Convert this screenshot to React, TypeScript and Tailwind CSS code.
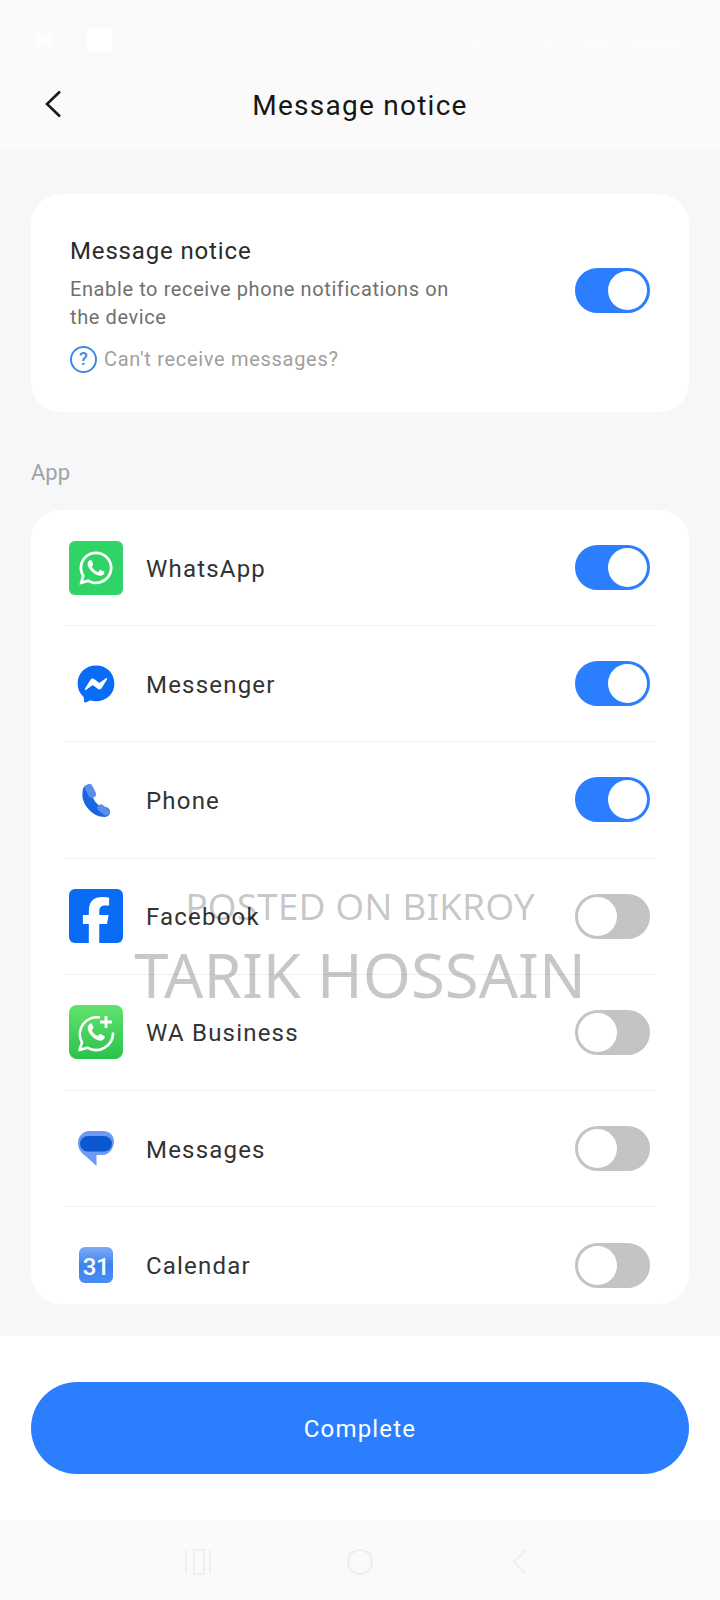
import { ReactNode } from 'react';
import { FaFacebookMessenger, FaWhatsapp } from 'react-icons/fa';
import { FaFacebookF } from 'react-icons/fa6';

function Toggle({ on, className = '' }: { on: boolean; className?: string }) {
  return (
    <div
      className={`flex h-[45px] w-[75px] shrink-0 rounded-full border-[3px] ${className} ${
        on ? 'justify-end border-[#2b7fff] bg-[#2b7fff]' : 'justify-start border-[#c4c4c4] bg-[#c4c4c4]'
      }`}
    >
      <div className="h-[39px] w-[39px] rounded-full bg-white" />
    </div>
  );
}

function BusinessIcon() {
  return (
    <div className="flex h-[54px] w-[54px] items-center justify-center rounded-[8px] bg-gradient-to-b from-[#5fe36d] to-[#27c24c]">
      <svg viewBox="0 0 54 54" className="h-[54px] w-[54px]" fill="none" stroke="white">
        <path
          d="M31 12.5A17 17 0 0 0 13 37.5L10.5 45l8-2.3A17 17 0 0 0 44 27.5"
          strokeWidth="2.6"
          strokeLinejoin="round"
        />
        <path d="M37 11v12M31 17h12" strokeWidth="2.8" />
        <path
          d="M21.5 18.5c-2 1-3.4 3-2.6 6 1.4 5 5.8 9.6 11 11 2.6.6 5-.8 5.8-2.8.3-.9 0-1.4-.6-1.8l-3.4-1.8c-.7-.3-1.2-.1-1.6.4l-1.2 1.5c-3-1.1-5-3.2-6.2-6l1.3-1.2c.5-.5.6-1 .4-1.6l-1.500-3.400c-.3-.7-1.200-.8-1.400-.3z"
          fill="white"
          stroke="none"
        />
      </svg>
    </div>
  );
}

function PhoneIcon() {
  return (
    <svg viewBox="0 0 28 34" className="h-[34px] w-[28px]" fill="none" strokeLinecap="round">
      <path d="M6 7C3 17 12 29 23 29" stroke="#1a66e0" strokeWidth="10" />
      <path d="M7 5 10 11" stroke="#5b8def" strokeWidth="8" />
      <path d="M19 25 24 29" stroke="#5b8def" strokeWidth="7" />
    </svg>
  );
}

function MessagesIcon() {
  return (
    <svg viewBox="0 0 36 36" className="h-[36px] w-[36px]">
      <path
        d="M11 0h14c6 0 11 4 11 10.500S31 24 25 24h-6.500V35L7 24.500C2 21 0 17 0 12 0 5 5 0 11 0z"
        fill="#6d9bf5"
      />
      <rect x="2" y="5" width="32" height="15.500" rx="7.700" fill="#0b57d0" />
    </svg>
  );
}

function CalendarIcon() {
  return (
    <div className="flex h-[36px] w-[34px] items-center justify-center rounded-[6px] bg-gradient-to-b from-[#7dacf8] via-[#3b82f0] to-[#4a8df5] pt-[3px]">
      <span className="text-[24px] leading-none font-medium tracking-[-0.5px] text-white">31</span>
    </div>
  );
}

const apps: { name: string; on: boolean; icon: ReactNode }[] = [
  {
    name: 'WhatsApp',
    on: true,
    icon: (
      <div className="flex h-[54px] w-[54px] items-center justify-center rounded-[6px] bg-[#2fd366]">
        <FaWhatsapp className="h-[38px] w-[38px] text-white" />
      </div>
    ),
  },
  { name: 'Messenger', on: true, icon: <FaFacebookMessenger className="h-[38px] w-[38px] text-[#0a6cf5]" /> },
  { name: 'Phone', on: true, icon: <PhoneIcon /> },
  {
    name: 'Facebook',
    on: false,
    icon: (
      <div className="flex h-[54px] w-[54px] items-end justify-center overflow-hidden rounded-[6px] bg-[#0a6cf5]">
        <FaFacebookF className="h-[46px] w-[46px] text-white" />
      </div>
    ),
  },
  { name: 'WA Business', on: false, icon: <BusinessIcon /> },
  { name: 'Messages', on: false, icon: <MessagesIcon /> },
  { name: 'Calendar', on: false, icon: <CalendarIcon /> },
];

export default function App() {
  return (
    <div className="relative flex h-[1600px] w-[720px] flex-col overflow-hidden bg-[#f6f7f9] font-['Roboto',sans-serif]">
      {/* status bar + title */}
      <div className="h-[150px] bg-[#fafafa] px-[36px]">
        <div className="flex h-[76px] items-start justify-between pt-[28px]">
          <div className="flex items-start gap-[34px]">
            <div className="mt-[6px] h-[12px] w-[17px] bg-white/50" />
            <div className="h-[24px] w-[25px] bg-white" />
          </div>
          <div className="mt-[6px] flex gap-[22px] pr-[4px]">
            <div className="h-[16px] w-[18px] bg-white/30" />
            <div className="h-[16px] w-[10px] bg-white/30" />
            <div className="h-[16px] w-[20px] bg-white/30" />
            <div className="h-[16px] w-[28px] bg-white/30" />
            <div className="h-[16px] w-[50px] bg-white/30" />
          </div>
        </div>
        <div className="relative flex items-center justify-center pt-[12px]">
          <svg viewBox="0 0 18 28" className="absolute top-[14px] left-[8px] h-[28px] w-[18px]" fill="none">
            <path d="M16 1.500 3 14l13 12.500" stroke="#1a1a1a" strokeWidth="2.600" />
          </svg>
          <h1 className="text-[28px] leading-[36px] tracking-[1.25px] text-[#161616]">Message notice</h1>
        </div>
      </div>

      <div className="flex h-[1186px] flex-col px-[31px] pt-[44px]">
        <div className="flex h-[218px] items-start justify-between rounded-[30px] bg-white px-[39px] pt-[42px]">
          <div>
            <h2 className="text-[24px] leading-[30px] tracking-[0.85px] text-[#2b2b2b]">Message notice</h2>
            <p className="mt-[9px] w-[390px] text-[20px] leading-[28px] tracking-[0.6px] text-[#707070]">
              Enable to receive phone notifications on the device
            </p>
            <div className="mt-[14px] flex items-center gap-[7px]">
              <div className="flex h-[27px] w-[27px] items-center justify-center rounded-full border-2 border-[#3f8ae0] text-[18px] leading-none font-medium text-[#3f8ae0]">
                ?
              </div>
              <span className="text-[20px] leading-[28px] tracking-[0.7px] text-[#a0a0a0]">Can't receive messages?</span>
            </div>
          </div>
          <Toggle on className="mt-[32px]" />
        </div>

        <p className="mt-[47px] h-[28px] text-[22px] leading-[28px] text-[#a3a3a3]">App</p>
        <div className="mt-[23px] h-[794px] overflow-hidden rounded-[30px] bg-white">
          {apps.map((app) => (
            <div key={app.name} className="mx-[33px] flex h-[116.2px] items-center justify-between border-b border-[#f0f0f0] pr-[6px] pl-[5px] last:border-b-0">
              <div className="flex items-center">
                <div className="flex w-[54px] items-center justify-center">{app.icon}</div>
                <span className="ml-[23px] pt-[2px] text-[24px] tracking-[1.2px] text-[#333333]">{app.name}</span>
              </div>
              <Toggle on={app.on} />
            </div>
          ))}
        </div>
      </div>

      <div className="flex h-[184px] items-center bg-white px-[31px]">
        <button className="h-[92px] w-full rounded-full bg-[#2b7fff] pt-[2px] text-[24px] tracking-[1.2px] text-white">Complete</button>
      </div>

      {/* nav bar, barely visible */}
      <div className="flex h-[80px] items-center justify-center gap-[134px] bg-[#fafafa] pt-[4px]">
        <svg viewBox="0 0 28 26" className="h-[26px] w-[28px]" fill="none" stroke="#f0f0f0" strokeWidth="2">
          <path d="M2 1v24M10 1h10v24H10zM26 1v24" />
        </svg>
        <svg viewBox="0 0 28 26" className="h-[26px] w-[28px]" fill="none" stroke="#eeeeee" strokeWidth="2">
          <ellipse cx="14" cy="13" rx="12" ry="12" />
        </svg>
        <svg viewBox="0 0 28 26" className="h-[26px] w-[28px]" fill="none" stroke="#eeeeee" strokeWidth="2">
          <path d="M18 1 6 13l12 12" />
        </svg>
      </div>

      {/* watermark */}
      <div className="pointer-events-none absolute top-[880px] left-0 flex w-full flex-col items-center font-['Noto_Sans',sans-serif] text-black/[0.22]">
        <span className="text-[37.2px] leading-[52px]">POSTED ON BIKROY</span>
        <span className="text-[61.7px] leading-[84px]">TARIK HOSSAIN</span>
      </div>
    </div>
  );
}
